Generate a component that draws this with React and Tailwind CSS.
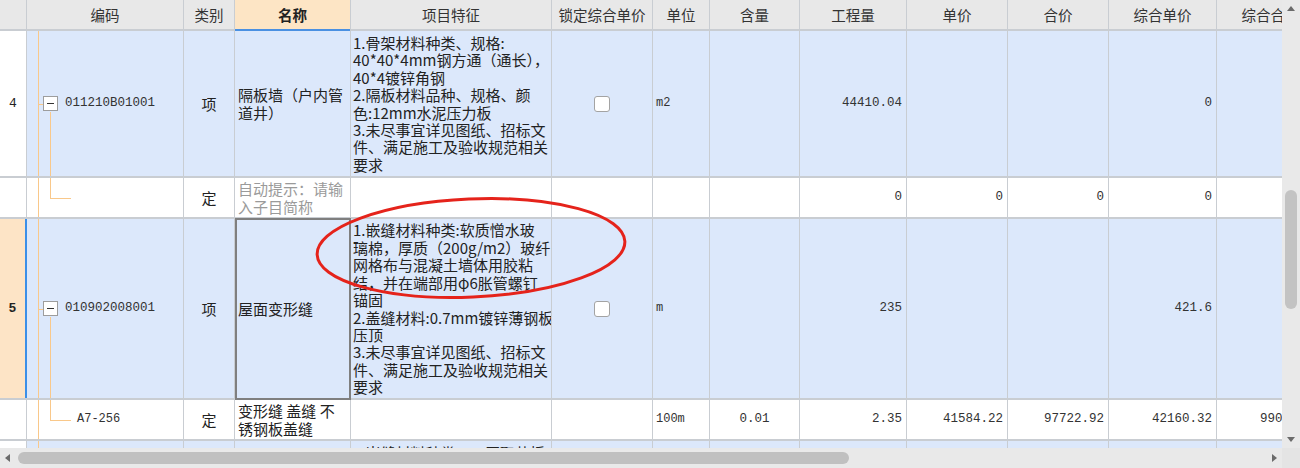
const LINE = "border-[#c9cdd2]";
const TREE = "bg-[#f9c88a]";
const MONO = "[font-family:'Liberation_Mono',monospace]";

const W = {
  no: "w-[27px]",
  code: "w-[157px]",
  type: "w-[51px]",
  name: "w-[116px]",
  feat: "w-[201px]",
  lock: "w-[101px]",
  unit: "w-[57px]",
  qty: "w-[90px]",
  amount: "w-[107px]",
  price: "w-[101px]",
  total: "w-[101px]",
  uprice: "w-[108px]",
  utotal: "w-[108px]",
};

const HEAD = [
  ["no", ""],
  ["code", "编码"],
  ["type", "类别"],
  ["name", "名称"],
  ["feat", "项目特征"],
  ["lock", "锁定综合单价"],
  ["unit", "单位"],
  ["qty", "含量"],
  ["amount", "工程量"],
  ["price", "单价"],
  ["total", "合价"],
  ["uprice", "综合单价"],
  ["utotal", "综合合价"],
];

const feat4 = [
  "1.骨架材料种类、规格:",
  "40*40*4mm钢方通（通长），",
  "40*4镀锌角钢",
  "2.隔板材料品种、规格、颜",
  "色:12mm水泥压力板",
  "3.未尽事宜详见图纸、招标文",
  "件、满足施工及验收规范相关",
  "要求",
];

const feat5 = [
  "1.嵌缝材料种类:软质憎水玻",
  "璃棉，厚质（200g/m2）玻纤",
  "网格布与混凝土墙体用胶粘",
  "结，并在端部用φ6胀管螺钉",
  "锚固",
  "2.盖缝材料:0.7mm镀锌薄钢板",
  "压顶",
  "3.未尽事宜详见图纸、招标文",
  "件、满足施工及验收规范相关",
  "要求",
];

const feat6 = ["1.嵌缝材料种类:100厚聚苯板", "填塞，外覆防水卷材"];

function C({ k, className = "", children }) {
  return (
    <div
      className={`${W[k]} shrink-0 h-full border-r ${LINE} flex items-center relative ${className}`}
    >
      {children}
    </div>
  );
}

function Num({ k, v, center }) {
  return (
    <C
      k={k}
      className={`${center ? "justify-center" : "justify-end pr-[4px]"} ${MONO} text-[12.5px] text-[#333]`}
    >
      {v}
    </C>
  );
}

function Lines({ lines, className = "" }) {
  return (
    <div className={`whitespace-nowrap ${className}`}>
      {lines.map((l, i) => (
        <div key={i}>{l}</div>
      ))}
    </div>
  );
}

function Tree({ kind, code }) {
  return (
    <C k="code" className="pl-[16px] overflow-hidden">
      <span className={`absolute left-[11px] -top-[2px] -bottom-[2px] w-px ${TREE}`} />
      {kind === "parent" && (
        <>
          <span className={`absolute left-[11px] top-1/2 w-[5px] h-px ${TREE}`} />
          <span className={`absolute left-[23px] top-[calc(50%+8px)] -bottom-[2px] w-px ${TREE}`} />
          <span className="relative w-[15px] h-[15px] border border-[#9d9d9d] bg-white flex items-center justify-center">
            <span className="w-[7px] h-px bg-[#333]" />
          </span>
          <span className={`ml-[7px] ${MONO} text-[12.5px] text-[#333]`}>{code}</span>
        </>
      )}
      {kind === "child" && (
        <>
          <span className={`absolute left-[23px] -top-[2px] h-[calc(50%+2px)] w-px ${TREE}`} />
          <span className={`absolute left-[23px] top-1/2 w-[21px] h-px ${TREE}`} />
          {code && (
            <span className={`ml-[34px] ${MONO} text-[12px] text-[#333]`}>{code}</span>
          )}
        </>
      )}
    </C>
  );
}

function Check() {
  return (
    <C k="lock" className="justify-center">
      <span className="w-[16px] h-[16px] rounded-[3px] border border-[#a3a3a3] bg-white" />
    </C>
  );
}

function Header() {
  return (
    <div className={`flex h-[31px] border-b-2 ${LINE} bg-[#e8e8e8] text-[14.5px] text-[#333]`}>
      {HEAD.map(([k, t]) =>
        k === "name" ? (
          <C key={k} k={k} className="justify-center bg-[#fde5c5] font-bold text-[#222]">
            {t}
            <span className="absolute left-0 right-0 -bottom-[2px] h-[2px] bg-[#4a90e2]" />
          </C>
        ) : (
          <C key={k} k={k} className="justify-center whitespace-nowrap overflow-hidden">
            {t}
          </C>
        )
      )}
    </div>
  );
}

function Row({ h, white, children }) {
  return (
    <div
      className={`flex ${h} border-b-2 ${LINE} ${white ? "bg-white" : "bg-[#dce8fb]"} text-[15px] text-[#222]`}
    >
      {children}
    </div>
  );
}

function VScroll() {
  return (
    <div className="w-[18px] h-full bg-[#e9e9e9] flex flex-col items-center">
      <svg width="8" height="5" className="mt-[6px]" viewBox="0 0 8 5">
        <path d="M0 5 L4 0 L8 5 Z" fill="#6b6b6b" />
      </svg>
      <div className="mt-[179px] w-[12px] h-[119px] rounded-full bg-[#c3c3c3]" />
      <div className="flex-1" />
      <svg width="8" height="5" className="mb-[6px]" viewBox="0 0 8 5">
        <path d="M0 0 L8 0 L4 5 Z" fill="#6b6b6b" />
      </svg>
    </div>
  );
}

function HScroll() {
  return (
    <div className="flex h-[20px]">
      <div className="w-[1282px] h-full bg-[#e9e9e9] flex items-center">
        <svg width="5" height="8" className="ml-[5px]" viewBox="0 0 5 8">
          <path d="M5 0 L0 4 L5 8 Z" fill="#6b6b6b" />
        </svg>
        <div className="ml-[8px] w-[831px] h-[12px] rounded-full bg-[#c0c0c0]" />
        <div className="flex-1" />
        <svg width="5" height="8" className="mr-[5px]" viewBox="0 0 5 8">
          <path d="M0 0 L5 4 L0 8 Z" fill="#6b6b6b" />
        </svg>
      </div>
      <div className="w-[18px] h-full bg-[#e4e4e4]" />
    </div>
  );
}

export default function App() {
  return (
    <div className="relative w-[1300px] h-[468px] overflow-hidden bg-white [font-family:'Noto_Sans_CJK_SC',sans-serif] leading-[17.4px]">
      <div className="flex h-[448px]">
        <div className="w-[1282px] h-full overflow-hidden">
          <div className="w-[1325px]">
            <Header />

            <Row h="h-[147px]">
              <C k="no" className={`justify-center bg-white ${MONO} text-[13px]`}>4</C>
              <Tree kind="parent" code="011210B01001" />
              <C k="type" className="justify-center">项</C>
              <C k="name" className="pl-[3px]">
                <Lines lines={["隔板墙（户内管", "道井）"]} />
              </C>
              <C k="feat" className="pl-[2px] overflow-hidden">
                <Lines lines={feat4} />
              </C>
              <Check />
              <C k="unit" className={`pl-[3px] ${MONO} text-[12px] text-[#333]`}>m2</C>
              <Num k="qty" v="" />
              <Num k="amount" v="44410.04" />
              <Num k="price" v="" />
              <Num k="total" v="" />
              <Num k="uprice" v="0" />
              <Num k="utotal" v="" />
            </Row>

            <Row h="h-[41px]" white>
              <C k="no" />
              <Tree kind="child" />
              <C k="type" className="justify-center">定</C>
              <C k="name" className="pl-[3px] text-[#9a9a9a]">
                <Lines lines={["自动提示：请输", "入子目简称"]} />
              </C>
              <C k="feat" />
              <C k="lock" />
              <C k="unit" />
              <Num k="qty" v="" />
              <Num k="amount" v="0" />
              <Num k="price" v="0" />
              <Num k="total" v="0" />
              <Num k="uprice" v="0" />
              <Num k="utotal" v="" />
            </Row>

            <Row h="h-[181px]">
              <div
                className={`w-[27px] shrink-0 h-full border-r-2 border-[#3b8fe8] bg-[#fde4c6] flex items-center justify-center font-bold ${MONO} text-[13px]`}
              >
                5
              </div>
              <Tree kind="parent" code="010902008001" />
              <C k="type" className="justify-center">项</C>
              <C k="name" className="pl-[3px]">
                <span className="absolute left-0 -top-px -right-px -bottom-[2px] border-2 border-[#7f7f7f]" />
                屋面变形缝
              </C>
              <C k="feat" className="pl-[2px] overflow-hidden">
                <Lines lines={feat5} />
              </C>
              <Check />
              <C k="unit" className={`pl-[3px] ${MONO} text-[12px] text-[#333]`}>m</C>
              <Num k="qty" v="" />
              <Num k="amount" v="235" />
              <Num k="price" v="" />
              <Num k="total" v="" />
              <Num k="uprice" v="421.6" />
              <Num k="utotal" v="" />
            </Row>

            <Row h="h-[41px]" white>
              <C k="no" />
              <Tree kind="child" code="A7-256" />
              <C k="type" className="justify-center">定</C>
              <C k="name" className="pl-[3px]">
                <Lines lines={["变形缝 盖缝 不", "锈钢板盖缝"]} />
              </C>
              <C k="feat" />
              <C k="lock" />
              <C k="unit" className={`pl-[3px] ${MONO} text-[12px] text-[#333]`}>100m</C>
              <Num k="qty" v="0.01" center />
              <Num k="amount" v="2.35" />
              <Num k="price" v="41584.22" />
              <Num k="total" v="97722.92" />
              <Num k="uprice" v="42160.32" />
              <Num k="utotal" v="99076.75" />
            </Row>

            <Row h="h-[40px]">
              <C k="no" className="bg-white" />
              <Tree kind="none" />
              <C k="type" />
              <C k="name" />
              <C k="feat" className="pl-[2px] items-start pt-[3px] overflow-hidden">
                <Lines lines={feat6} />
              </C>
              <C k="lock" />
              <C k="unit" />
              <C k="qty" />
              <C k="amount" />
              <C k="price" />
              <C k="total" />
              <C k="uprice" />
              <C k="utotal" />
            </Row>
          </div>
        </div>
        <VScroll />
      </div>
      <HScroll />

      <svg
        className="absolute left-0 top-0 pointer-events-none"
        width="1300"
        height="468"
        viewBox="0 0 1300 468"
      >
        <ellipse
          cx="471"
          cy="248"
          rx="154"
          ry="49"
          transform="rotate(-2.5 471 248)"
          fill="none"
          stroke="#e5231b"
          strokeWidth="3"
        />
      </svg>
    </div>
  );
}
